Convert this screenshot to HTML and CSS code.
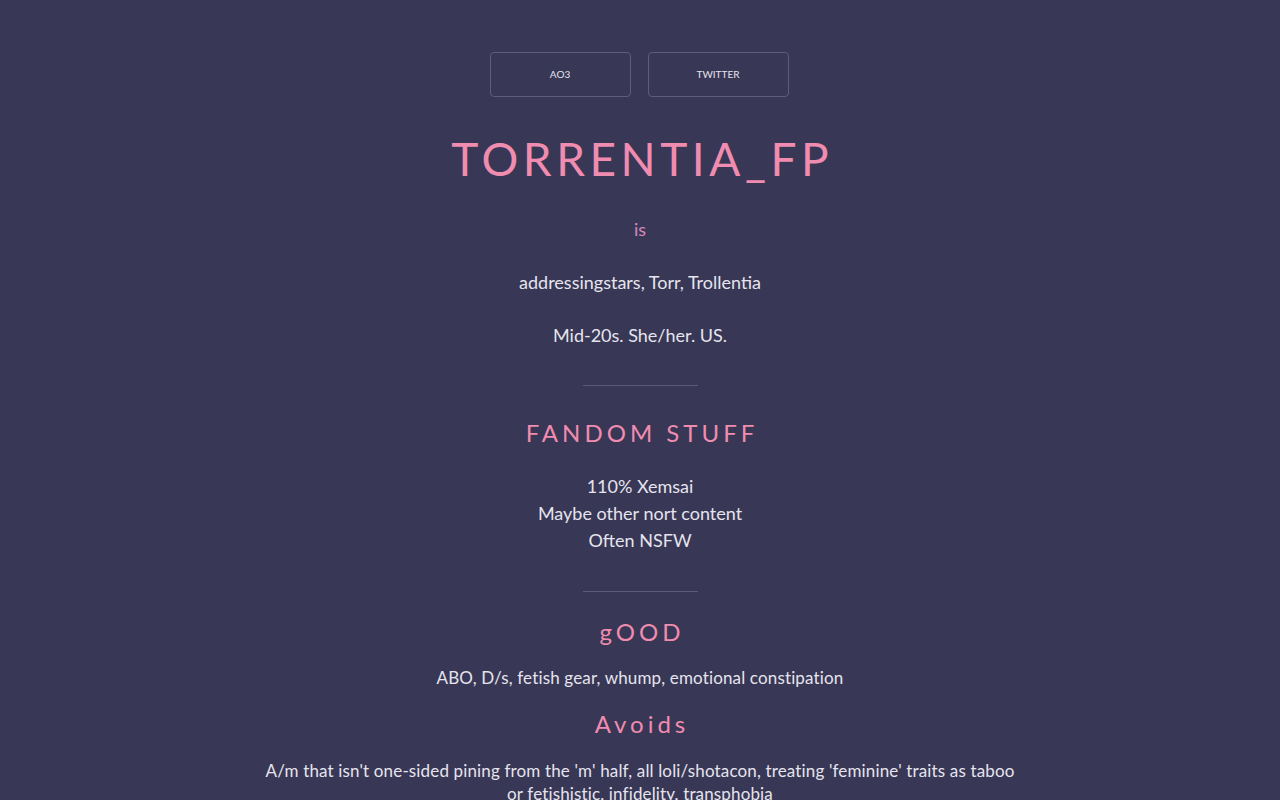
FILE: index.html
```html
<!DOCTYPE html>
<html lang="en">
<head>
<meta charset="utf-8">
<title>torrentia_fp</title>
<link rel="stylesheet" href="styles.css">
</head>
<body>
<main class="page">
  <nav class="links">
    <a class="btn" href="#">AO3</a>
    <a class="btn" href="#">TWITTER</a>
  </nav>
  <h1 class="title">TORRENTIA_FP</h1>
  <p class="is">is</p>
  <p class="line">addressingstars, Torr, Trollentia</p>
  <p class="line">Mid-20s. She/her. US.</p>
  <hr class="rule">
  <h2 class="section">FANDOM STUFF</h2>
  <ul class="list">
    <li>110% Xemsai</li>
    <li>Maybe other nort content</li>
    <li>Often NSFW</li>
  </ul>
  <hr class="rule rule2">
  <h2 class="section good">gOOD</h2>
  <p class="small">ABO, D/s, fetish gear, whump, emotional constipation</p>
  <h2 class="section avoids">Avoids</h2>
  <p class="small wide">A/m that isn't one-sided pining from the 'm' half, all loli/shotacon, treating 'feminine' traits as taboo or fetishistic, infidelity, transphobia</p>
</main>
</body>
</html>
```
FILE: styles.css
```css
html, body {
  margin: 0;
  padding: 0;
  background: #383755;
}
body {
  font-family: "Lato", "Noto Sans", sans-serif;
  color: #e6e4ee;
}
.page {
  max-width: 780px;
  margin: 0 auto;
  padding-top: 52px;
  display: flex;
  flex-direction: column;
  align-items: center;
  text-align: center;
}
.links {
  display: flex;
  gap: 17px;
  margin-right: 2px;
}
.btn {
  width: 139px;
  height: 42px;
  padding-bottom: 1px;
  box-sizing: content-box;
  border: 1px solid #5e5d7c;
  border-radius: 4px;
  display: flex;
  align-items: center;
  justify-content: center;
  font-size: 10px;
  line-height: 10px;
  color: #e6e4ee;
  text-decoration: none;
}
.title {
  margin: 34px 0 0;
  font-size: 46px;
  font-weight: 400;
  letter-spacing: 4.5px;
  line-height: 56px;
  color: #f08cb0;
  padding-left: 4.5px;
}
.is {
  margin: 31px 0 0;
  font-size: 18px;
  line-height: 22px;
  color: #d58ab8;
}
.line {
  margin: 31px 0 0;
  font-size: 18px;
  line-height: 22px;
}
.rule {
  width: 115px;
  border: 0;
  border-top: 1px solid #5a5a7a;
  margin: 39px 0 0;
}
.section {
  margin: 33px 0 0;
  font-size: 24px;
  font-weight: 400;
  letter-spacing: 4px;
  line-height: 28px;
  color: #f08cb0;
  padding-left: 4px;
}
.list {
  list-style: none;
  padding: 0;
  margin: 26px 0 0;
  font-size: 18px;
  line-height: 27px;
}
.rule2 {
  margin-top: 37px;
}
.good {
  margin-top: 26px;
}
.small {
  margin: 20px 0 0;
  font-size: 17px;
  line-height: 23px;
  letter-spacing: 0.15px;
}
.wide {
  max-width: 760px;
  margin-top: 21px;
}
.avoids {
  margin-top: 21px;
}
```
